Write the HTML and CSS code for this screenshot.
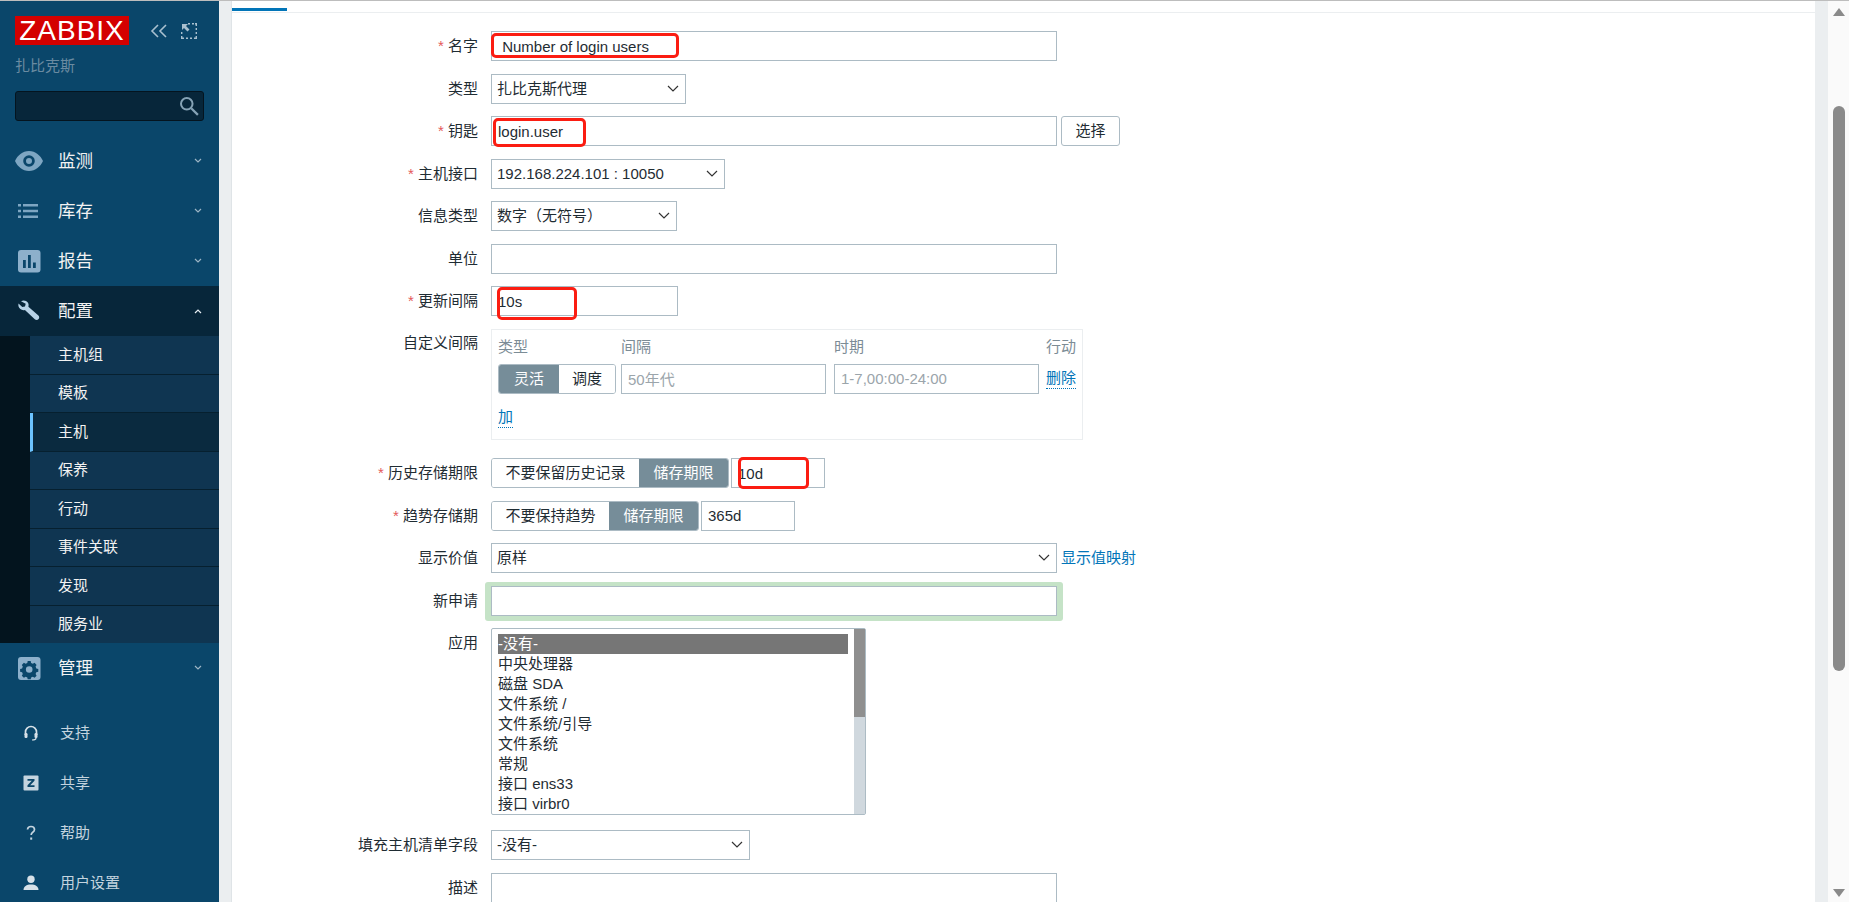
FILE: index.html
```html
<!DOCTYPE html>
<html lang="zh-CN">
<head>
<meta charset="utf-8">
<title>Zabbix 监控项</title>
<link rel="stylesheet" href="styles.css">
</head>
<body>
<div class="topline"></div>
<div class="page">
  <aside class="sidebar">
    <div class="logo-row">
      <div class="logo">ZABBIX</div>
      <svg class="collapse" viewBox="0 0 18 14" width="18" height="14"><path d="M8 1 2 7l6 6M16 1l-6 6 6 6" fill="none" stroke="#a9c0cf" stroke-width="1.6"/></svg>
      <svg class="expand" viewBox="0 0 16 16" width="16" height="16"><path d="M7 .7h2M11 .7h2M14 .7h1.3V3M15.3 5v2M15.3 9v2M15.3 13v2.3H13M11 15.3H9M7 15.3H5M3 15.3H.7V13M.7 11V9" fill="none" stroke="#a9c0cf" stroke-width="1.4"/><path d="M1 1h6L5 3l3.500 3.500-2 2L3 5 1 7z" fill="#a9c0cf"/></svg>
    </div>
    <div class="brand">扎比克斯</div>
    <div class="search">
      <svg viewBox="0 0 18 18" width="20" height="20"><circle cx="7" cy="7" r="5.200" fill="none" stroke="#86a3b6" stroke-width="1.800"/><path d="m11 11 6 6" stroke="#86a3b6" stroke-width="2"/></svg>
    </div>
    <nav class="menu">
      <div class="menu-item">
        <svg class="menu-icon" viewBox="0 0 28 20" width="28" height="20"><path fill-rule="evenodd" d="M14 0c6.500 0 11.500 4.500 14 10-2.500 5.500-7.500 10-14 10S2.500 15.500 0 10C2.500 4.500 7.500 0 14 0zm0 4.200a5.800 5.800 0 1 0 0 11.600 5.800 5.800 0 0 0 0-11.600zm0 2.800a3 3 0 1 1 0 6 3 3 0 0 1 0-6z" fill="#7ea6c2"/></svg>
        <span class="menu-text">监测</span>
        <svg class="chev" viewBox="0 0 8 6" width="8" height="6"><path d="m1 1 3 3 3-3" fill="none" stroke="#9db5c5" stroke-width="1.200"/></svg>
      </div>
      <div class="menu-item">
        <svg class="menu-icon" viewBox="0 0 28 20" width="28" height="20"><path d="M3 3h3v2.500H3zM8 3h15v2.500H8zM3 8.800h3v2.500H3zM8 8.800h15v2.500H8zM3 14.500h3V17H3zM8 14.500h15V17H8z" fill="#7ea6c2"/></svg>
        <span class="menu-text">库存</span>
        <svg class="chev" viewBox="0 0 8 6" width="8" height="6"><path d="m1 1 3 3 3-3" fill="none" stroke="#9db5c5" stroke-width="1.200"/></svg>
      </div>
      <div class="menu-item">
        <svg class="menu-icon" viewBox="0 0 28 24" width="28" height="24"><rect x="3" y="1" width="22.500" height="22.500" rx="3" fill="#8db0cb"/><path d="M8 11h2.800v8H8zM13 6h2.800v13H13zM18 13.500h2.800V19H18z" fill="#0a466a"/></svg>
        <span class="menu-text">报告</span>
        <svg class="chev" viewBox="0 0 8 6" width="8" height="6"><path d="m1 1 3 3 3-3" fill="none" stroke="#9db5c5" stroke-width="1.200"/></svg>
      </div>
      <div class="menu-item open">
        <svg class="menu-icon" viewBox="0 0 28 24" width="28" height="24"><path d="M6 2.200c2.600-1.300 5.400-.6 6.800 1.400.9 1.300 1 2.800.6 4.100l10 8.800c1 1 1.100 2.500.2 3.600-1 1.100-2.700 1.200-3.800.2l-9.900-9.300c-1.500.5-3.200.2-4.600-.9C3.600 8.600 3 6.500 3.500 4.500L7.300 8l2.700-.6.700-2.700z" fill="#b7d2e6"/></svg>
        <span class="menu-text">配置</span>
        <svg class="chev" viewBox="0 0 8 6" width="8" height="6"><path d="m1 5 3-3 3 3" fill="none" stroke="#e6eef3" stroke-width="1.200"/></svg>
      </div>
      <div class="submenu">
        <div class="sub-list">
          <div class="sub-item">主机组</div>
          <div class="sub-item">模板</div>
          <div class="sub-item active">主机</div>
          <div class="sub-item">保养</div>
          <div class="sub-item">行动</div>
          <div class="sub-item">事件关联</div>
          <div class="sub-item">发现</div>
          <div class="sub-item">服务业</div>
        </div>
      </div>
      <div class="menu-item">
        <svg class="menu-icon" viewBox="0 0 28 24" width="28" height="24"><rect x="3" y="1" width="22.500" height="23" rx="3" fill="#8db0cb"/><path fill-rule="evenodd" d="M12.700 5h3l.4 2 1.700.8 1.800-1 2 2.100-1 1.700.7 1.800 2 .5v2.800l-2 .5-.7 1.800 1 1.700-2 2-1.800-1-1.700.7-.4 1.900h-3l-.4-1.900-1.700-.7-1.700 1-2.100-2 1-1.700-.7-1.800-2-.5v-2.800l2-.5.7-1.800-1-1.700 2.100-2.100 1.700 1 1.700-.8zm1.500 5.200a3.300 3.300 0 1 0 0 6.600 3.300 3.300 0 0 0 0-6.600z" fill="#0a466a"/></svg>
        <span class="menu-text">管理</span>
        <svg class="chev" viewBox="0 0 8 6" width="8" height="6"><path d="m1 1 3 3 3-3" fill="none" stroke="#9db5c5" stroke-width="1.200"/></svg>
      </div>
    </nav>
    <div class="user-menu">
      <div class="user-item">
        <svg class="user-icon" viewBox="0 0 16 16" width="16" height="16"><path d="M2.500 10V7a5.500 5.500 0 0 1 11 0v3" fill="none" stroke="#d7e1e8" stroke-width="1.700"/><rect x="1.500" y="8" width="3" height="5" rx="1.200" fill="#d7e1e8"/><rect x="11.500" y="8" width="3" height="5" rx="1.200" fill="#d7e1e8"/><path d="M13 13c0 1.500-1.500 2-4 2" fill="none" stroke="#d7e1e8" stroke-width="1.200"/></svg>
        <span>支持</span>
      </div>
      <div class="user-item">
        <svg class="user-icon" viewBox="0 0 16 16" width="16" height="16"><rect x=".500" y=".500" width="15" height="15" rx="1" fill="#c4d4df"/><path d="M4.500 4h7v1.800l-4.300 4.500h4.300V12h-7v-1.800l4.300-4.500H4.500z" fill="#0a466a"/></svg>
        <span>共享</span>
      </div>
      <div class="user-item">
        <svg class="user-icon" viewBox="0 0 16 16" width="16" height="16"><path d="M4.500 4.500C4.700 2.500 6 1.500 8 1.500s3.500 1.200 3.500 3c0 1.500-.9 2.200-2 3-.9.700-1.300 1.200-1.300 2.500" fill="none" stroke="#c4d4df" stroke-width="1.700"/><rect x="7.200" y="12.500" width="2" height="2.200" fill="#c4d4df"/></svg>
        <span>帮助</span>
      </div>
      <div class="user-item">
        <svg class="user-icon" viewBox="0 0 16 16" width="16" height="16"><circle cx="8" cy="4.200" r="3.700" fill="#d7e1e8"/><path d="M.500 15c0-3.500 3-5.500 7.500-5.500s7.500 2 7.500 5.500z" fill="#d7e1e8"/></svg>
        <span>用户设置</span>
      </div>
    </div>
  </aside>

  <main class="content">
    <div class="panel">
      <div class="tabs"><div class="tab"></div></div>
      <form class="form">
        <label class="label"><span class="req">*</span> 名字</label>
        <div class="field"><input class="input w-full" value=" Number of login users"></div>

        <label class="label">类型</label>
        <div class="field"><select class="select w-type"><option>扎比克斯代理</option></select></div>

        <label class="label"><span class="req">*</span> 钥匙</label>
        <div class="field row-key"><input class="input w-full" value="login.user"><button type="button" class="btn">选择</button></div>

        <label class="label"><span class="req">*</span> 主机接口</label>
        <div class="field"><select class="select w-iface"><option>192.168.224.101 : 10050</option></select></div>

        <label class="label">信息类型</label>
        <div class="field"><select class="select w-info"><option>数字（无符号）</option></select></div>

        <label class="label">单位</label>
        <div class="field"><input class="input w-full"></div>

        <label class="label"><span class="req">*</span> 更新间隔</label>
        <div class="field"><input class="input w-interval" value="10s"></div>

        <label class="label label-top">自定义间隔</label>
        <div class="field box-field">
          <div class="interval-box">
            <div class="ib-grid">
              <span class="ib-head">类型</span><span class="ib-head">间隔</span><span class="ib-head">时期</span><span class="ib-head">行动</span>
              <div class="seg"><span class="seg-btn on w-60">灵活</span><span class="seg-btn w-57">调度</span></div>
              <input class="input ph" value="50年代">
              <input class="input ph" value="1-7,00:00-24:00">
              <a class="link dotted">删除</a>
            </div>
            <a class="link dotted add">加</a>
          </div>
        </div>

        <label class="label"><span class="req">*</span> 历史存储期限</label>
        <div class="field row-tight">
          <div class="seg"><span class="seg-btn w-148">不要保留历史记录</span><span class="seg-btn on w-90">储存期限</span></div>
          <input class="input w-short" value="10d">
        </div>

        <label class="label"><span class="req">*</span> 趋势存储期</label>
        <div class="field row-tight">
          <div class="seg"><span class="seg-btn w-118">不要保持趋势</span><span class="seg-btn on w-90">储存期限</span></div>
          <input class="input w-short" value="365d">
        </div>

        <label class="label">显示价值</label>
        <div class="field row-key"><select class="select w-full"><option>原样</option></select><a class="link">显示值映射</a></div>

        <label class="label">新申请</label>
        <div class="field"><div class="green"><input class="input w-full"></div></div>

        <label class="label">应用</label>
        <div class="field list-field">
          <div class="listbox">
            <div class="list-rows">
              <div class="list-row sel">-没有-</div>
              <div class="list-row">中央处理器</div>
              <div class="list-row">磁盘 SDA</div>
              <div class="list-row">文件系统 /</div>
              <div class="list-row">文件系统/引导</div>
              <div class="list-row">文件系统</div>
              <div class="list-row">常规</div>
              <div class="list-row">接口 ens33</div>
              <div class="list-row">接口 virbr0</div>
            </div>
            <div class="list-scroll"><div class="list-thumb"></div></div>
          </div>
        </div>

        <label class="label">填充主机清单字段</label>
        <div class="field"><select class="select w-inv"><option>-没有-</option></select></div>

        <label class="label">描述</label>
        <div class="field"><div class="textarea"></div></div>
      </form>

      <div class="mark mark-name"></div>
      <div class="mark mark-key"></div>
      <div class="mark mark-int"></div>
      <div class="mark mark-hist"></div>
    </div>
  </main>

  <div class="scrollbar">
    <svg class="sb-arrow" viewBox="0 0 12 8" width="12" height="8"><path d="M6 0l6 8H0z" fill="#8a8a8a"/></svg>
    <div class="sb-thumb"></div>
    <svg class="sb-arrow" viewBox="0 0 12 8" width="12" height="8"><path d="M0 0h12L6 8z" fill="#8a8a8a"/></svg>
  </div>
</div>
</body>
</html>
```
FILE: styles.css
```css
* { box-sizing: border-box; }
html, body { margin: 0; height: 100%; overflow: hidden; }
body {
  font-family: "Liberation Sans", "Noto Sans CJK SC", sans-serif;
  font-size: 15px;
  line-height: 20px;
  color: #1f2c33;
  background: #fff;
}
.topline { height: 1px; background: #bdbdbd; }
.page { display: flex; height: 901px; }

/* sidebar */
.sidebar { width: 219px; flex: none; background: #0a466a; color: #f2f2f2; display: flex; flex-direction: column; overflow: hidden; }
.sidebar > * { flex: none; }
.logo-row { display: flex; align-items: flex-start; padding: 15px 0 0 15px; height: 44px; }
.logo { width: 114px; height: 29px; background: #d40000; color: #fff; font-size: 28px; line-height: 29px; letter-spacing: 1px; text-align: center; font-family: "Liberation Sans", sans-serif; }
.collapse { margin: 8px 0 0 21px; }
.expand { margin: 7px 0 0 13px; }
.brand { color: #6a8ba1; margin: 11px 0 0 15px; }
.search { margin: 15px 0 0 15px; width: 189px; height: 30px; background: #07263a; border: 1px solid #04141f; border-radius: 3px; display: flex; align-items: center; justify-content: flex-end; padding-right: 4px; }
.menu { margin-top: 15px; }
.menu-item { height: 50px; display: flex; align-items: center; font-size: 17.5px; position: relative; }
.menu-item.open { background: #07263a; }
.menu-icon { margin-left: 15px; flex: none; }
.menu-text { margin-left: 15px; flex: 1; }
.chev { margin-right: 17px; }
.submenu { background: #03141e; padding-left: 30px; }
.sub-list { height: 307px; display: flex; flex-direction: column; }
.sub-item { flex: 1; background: #0f3551; padding-left: 28px; display: flex; align-items: center; border-bottom: 1px solid #06202f; }
.sub-item:last-child { border-bottom: 0; }
.sub-item.active { background: #0a2a3f; border-left: 3px solid #6cc3ff; padding-left: 25px; }
.user-menu { margin-top: 15px; }
.user-item { height: 50px; display: flex; align-items: center; color: #c4d4df; }
.user-icon { margin-left: 23px; margin-right: 21px; flex: none; }

/* main */
.content { flex: none; width: 1609px; background: #ebeef0; padding: 0 13px 0 12px; }
.panel { position: relative; width: 1584px; height: 901px; background: #fff; border-left: 1px solid #dfe4e7; overflow: hidden; }
.tabs { height: 11px; border-bottom: 1px solid #ebeef0; box-sizing: content-box; }
.tab { width: 55px; height: 10px; border-bottom: 3px solid #0275b8; }
.form { display: grid; grid-template-columns: 246px 1fr; column-gap: 13px; row-gap: 12.5px; padding-top: 18px; }
.label { text-align: right; line-height: 30px; white-space: nowrap; }
.label-top { line-height: 27px; }
.req { color: #e45959; }
.field { display: flex; align-items: center; min-height: 30px; }
.row-key { gap: 4px; }
.row-tight { gap: 2px; }
.box-field { margin-bottom: 6px; }
.list-field { margin-bottom: 2.500px; }

.input, .select, .btn {
  height: 30px;
  font: inherit;
  color: #1f2c33;
  background: #fff;
  border: 1px solid #acbbc4;
  border-radius: 0;
  padding: 0 6px;
  outline: 0;
  flex: none;
}
.select {
  appearance: none;
  -webkit-appearance: none;
  padding: 0 20px 0 5px;
  background: #fff url("data:image/svg+xml,%3Csvg xmlns='http://www.w3.org/2000/svg' width='12' height='7'%3E%3Cpath d='M1 1l5 5 5-5' fill='none' stroke='%23333' stroke-width='1.200'/%3E%3C/svg%3E") no-repeat right 6px top 10px;
}
.w-full { width: 566px; }
.w-type { width: 195px; }
.w-iface { width: 234px; }
.w-info { width: 186px; }
.w-interval { width: 187px; }
.w-inv { width: 259px; }
.w-short { width: 94px; }
.btn { width: 59px; padding: 0; border-radius: 3px; }

.interval-box { width: 592px; height: 111px; border: 1px solid #ebeef0; padding: 7px 6px 0; }
.ib-grid { display: grid; grid-template-columns: 123px 213px 212px 30px; row-gap: 7px; grid-template-rows: 20px 30px; }
.ib-head { color: #7c8c96; }
.ph { color: #9ba5ab; width: 205px; }
.link { color: #0275b8; white-space: nowrap; }
.dotted { border-bottom: 1px dotted #0275b8; align-self: center; justify-self: start; height: 21px; }
.add { display: inline-block; margin-top: 13px; }

.seg { display: flex; height: 30px; width: max-content; border: 1px solid #acbbc4; border-radius: 3px; overflow: hidden; flex: none; }
.seg-btn { display: flex; align-items: center; justify-content: center; background: #fff; }
.seg-btn.on { background: #768d99; color: #fff; }
.w-60 { width: 60px; }
.w-57 { width: 56px; }
.w-148 { width: 147px; }
.w-118 { width: 117px; }
.w-90 { width: 89px; }

.green { margin: -4px 0 -5px -6px; padding: 4px 6px 5px; background: #c5e3c7; border-radius: 3px; }

.listbox { width: 375px; height: 187px; border: 1px solid #acbbc4; border-radius: 2px; display: flex; justify-content: space-between; }
.list-rows { width: 356px; padding: 5px 0 0 6px; }
.list-row { height: 20px; line-height: 20px; }
.list-row.sel { background: #767676; color: #fff; }
.list-scroll { width: 11px; background: #d0d8de; }
.list-thumb { height: 88px; background: #8f8f8f; }

.textarea { width: 566px; height: 60px; border: 1px solid #acbbc4; }

.mark { position: absolute; border: 3px solid #fb1d12; border-radius: 5px; }
.mark-name { left: 259px; top: 32px; width: 188px; height: 25px; }
.mark-key { left: 261px; top: 117px; width: 93px; height: 29px; }
.mark-int { left: 265px; top: 286px; width: 80px; height: 33px; }
.mark-hist { left: 506px; top: 456px; width: 71px; height: 32px; }

/* scrollbar */
.scrollbar { flex: 1; background: #fafafa; display: flex; flex-direction: column; align-items: center; padding: 7px 0 5px; position: relative; }
.sb-thumb { width: 12px; height: 565px; background: #8a8a8a; border-radius: 6px; margin: 90px 0 auto; }
```
